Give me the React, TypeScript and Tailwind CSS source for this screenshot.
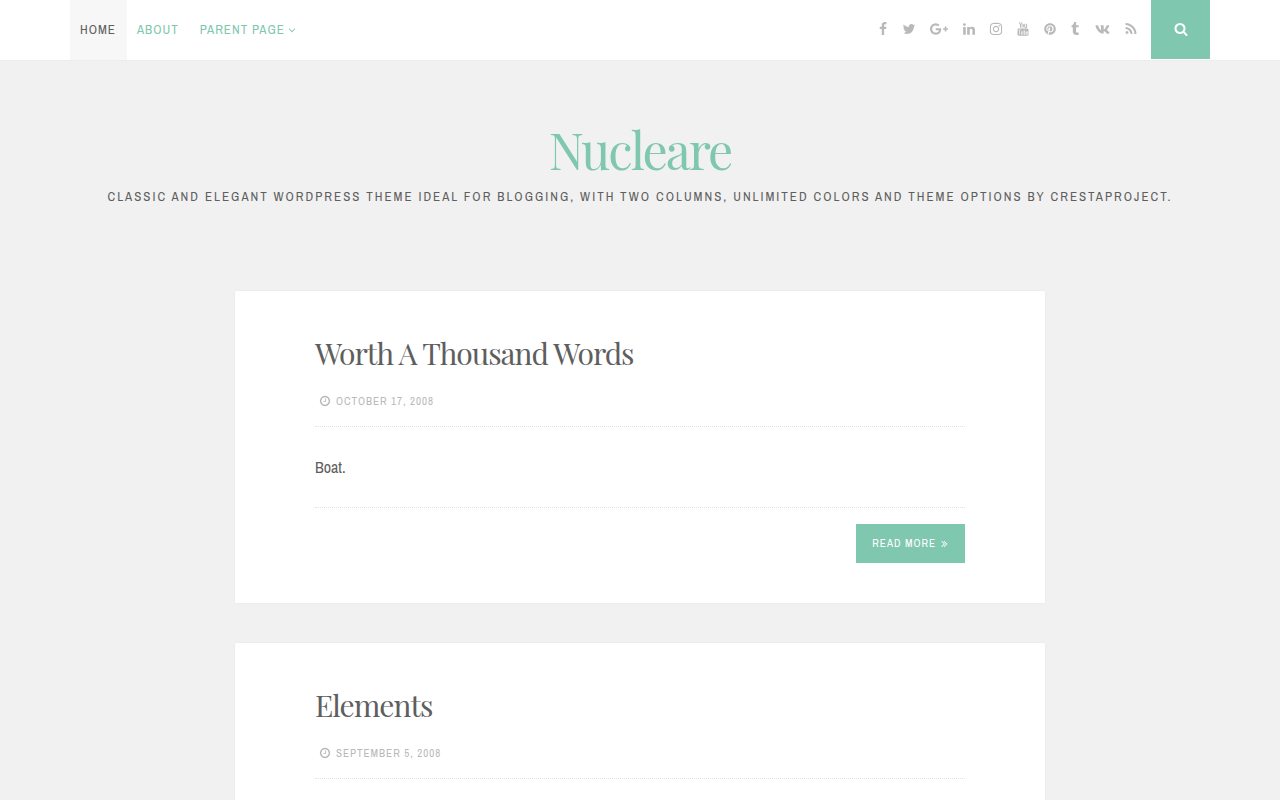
import type { ReactNode } from 'react'
import { FaInstagram, FaPinterest, FaVk } from 'react-icons/fa'

type GlyphProps = {
  d: string
  className: string
  viewBox?: string
}

function Glyph({ d, className, viewBox = '0 0 1792 1792' }: GlyphProps) {
  return (
    <svg viewBox={viewBox} fill="currentColor" aria-hidden="true" className={`shrink-0 ${className}`}>
      <path d={d} />
    </svg>
  )
}

const paths = {
  facebook:
    'M1343 12v264h-157q-86 0-116 36t-30 108v189h293l-39 296h-254v759h-306v-759h-255v-296h255v-218q0-186 104-288.500t277-102.500q147 0 228 12z',
  twitter:
    'M1684 408q-67 98-162 167 1 14 1 42 0 130-38 259.500t-115.500 248.500-184.500 210.500-258 146-323 54.500q-271 0-496-145 35 4 78 4 225 0 401-138-105-2-188-64.500t-114-159.500q33 5 61 5 43 0 85-11-112-23-185.500-111.500t-73.500-205.500v-4q68 38 146 41-66-44-105-115t-39-154q0-88 44-163 121 149 294.500 238.500t371.500 99.500q-8-38-8-74 0-134 94.500-228.500t228.500-94.500q140 0 236 102 109-21 205-78-37 115-142 178 93-10 186-50z',
  google:
    'M1437 913q0 208-87 370.500t-248 254-369 91.500q-149 0-285-58t-234-156-156-234-58-285 58-285 156-234 234-156 285-58q286 0 491 192l-199 191q-117-113-292-113-123 0-227.500 62t-165.500 168.500-61 232.500 61 232.500 165.500 168.500 227.500 62q83 0 152.500-23t114.500-57.500 78.500-78.500 49-83 21.500-74h-416v-252h692q12 63 12 122zm867-122v210h-209v209h-210v-209h-209v-210h209v-209h210v209h209z',
  linkedin:
    'M477 625v991h-330v-991h330zm21-306q1 73-50.500 122t-135.500 49h-2q-82 0-132-49t-50-122q0-74 51.500-122.500t134.500-48.500 133 48.500 51 122.500zm1166 729v568h-329v-530q0-105-40.500-164.500t-126.500-59.500q-63 0-105.500 34.500t-63.500 85.500q-11 30-11 81v553h-329q2-399 2-647t-1-296l-1-48h329v144h-2q20-32 41-56t56.500-52 87-43.500 114.500-15.500q171 0 275 113.500t104 332.500z',
  tumblr:
    'M1328 1329l80 237q-23 35-111 66t-177 32q-104 2-190.500-26t-142.500-74-95-106-55.500-120-16.500-118v-544h-168v-215q72-26 129-69.500t91-90 58-102 34-99 15-88.500q1-5 4.500-8.500t7.500-3.500h244v424h333v252h-334v518q0 30 6.500 56t22.500 52.500 49.500 41.500 81.500 14q78-2 134-29z',
  rss: 'M576 1344q0 80-56 136t-136 56-136-56-56-136 56-136 136-56 136 56 56 136zm512 123q2 28-17 48-18 21-47 21h-135q-25 0-43-16.500t-20-41.500q-22-229-184.500-391.500t-391.500-184.500q-25-2-41.500-20t-16.500-43v-135q0-29 21-47 17-17 43-17h5q160 13 306 80.500t259 181.500q114 113 181.500 259t80.500 306zm512 2q2 27-18 47-18 20-46 20h-143q-26 0-44.500-17.500t-19.500-42.500q-12-215-101-408.500t-231.500-336-336-231.500-408.500-102q-25-1-42.500-19.500t-17.500-43.500v-143q0-28 20-46 18-18 44-18h3q262 13 501.500 120t425.500 294q187 186 294 425.500t120 501.500z',
  search:
    'M1216 832q0-185-131.500-316.500t-316.500-131.500-316.500 131.500-131.500 316.500 131.500 316.500 316.500 131.500 316.500-131.500 131.500-316.500zm512 832q0 52-38 90t-90 38q-54 0-90-38l-343-342q-179 124-399 124-143 0-273.500-55.500t-225-150-150-225-55.500-273.500 55.500-273.500 150-225 225-150 273.500-55.500 273.500 55.500 225 150 150 225 55.500 273.500q0 220-124 399l343 343q37 37 37 90z',
  clock:
    'M1024 544v448q0 14-9 23t-23 9h-320q-14 0-23-9t-9-23v-64q0-14 9-23t23-9h224v-352q0-14 9-23t23-9h64q14 0 23 9t9 23zm416 352q0-148-73-273t-198-198-273-73-273 73-198 198-73 273 73 273 198 198 273 73 273-73 198-198 73-273zm224 0q0 209-103 385.500t-279.500 279.500-385.500 103-385.500-103-279.500-279.500-103-385.500 103-385.500 279.500-279.500 385.500-103 385.500 103 279.500 279.500 103 385.500z',
  angleDown:
    'M1395 736q0 13-10 23l-466 466q-10 10-23 10t-23-10l-466-466q-10-10-10-23t10-23l50-50q10-10 23-10t23 10l393 393 393-393q10-10 23-10t23 10l50 50q10 10 10 23z',
  angleDoubleRight:
    'M979 960q0 13-10 23l-466 466q-10 10-23 10t-23-10l-50-50q-10-10-10-23t10-23l393-393-393-393q-10-10-10-23t10-23l50-50q10-10 23-10t23 10l466 466q10 10 10 23zm384 0q0 13-10 23l-466 466q-10 10-23 10t-23-10l-50-50q-10-10-10-23t10-23l393-393-393-393q-10-10-10-23t10-23l50-50q10-10 23-10t23 10l466 466q10 10 10 23z',
}

function YoutubeLogo() {
  return (
    <svg viewBox="0 0 12 14" aria-hidden="true" className="h-[14px] w-3 shrink-0">
      <rect x="0.500" y="6.500" width="11" height="7.200" rx="1.400" fill="currentColor" />
      <path
        d="M2.300 .3 3.500 3V5.700M4.700 .3 3.500 3M7.700 1.800v3.500M9.600 1.800v3.700H7.900"
        fill="none"
        stroke="currentColor"
        strokeWidth="1"
      />
      <rect x="5" y="2.100" width="1.500" height="3.200" rx="0.700" fill="none" stroke="currentColor" strokeWidth="0.900" />
      <path
        d="M1.500 8h2M2.500 8v4.500M4.500 9.300v3h1.300V9.300M7.200 7.800v4.600h1V9.700h-1M10.600 11.500v.9H9.600V9.700h1V11h-1"
        fill="none"
        stroke="#fff"
        strokeWidth="0.600"
      />
    </svg>
  )
}

const socials: { name: string; width: string; icon: ReactNode }[] = [
  { name: 'Facebook', width: 'w-2', icon: <Glyph d={paths.facebook} className="size-[14px]" /> },
  { name: 'Twitter', width: 'w-[13px]', icon: <Glyph d={paths.twitter} className="size-[14px]" /> },
  {
    name: 'Google Plus',
    width: 'w-[18px]',
    icon: <Glyph d={paths.google} viewBox="0 0 2304 1792" className="h-[14px] w-[18px]" />,
  },
  { name: 'Linkedin', width: 'w-3', icon: <Glyph d={paths.linkedin} className="size-[14px]" /> },
  { name: 'Instagram', width: 'w-3', icon: <FaInstagram className="size-[14px] shrink-0" /> },
  { name: 'YouTube', width: 'w-3', icon: <YoutubeLogo /> },
  { name: 'Pinterest', width: 'w-3', icon: <FaPinterest className="size-3 shrink-0" /> },
  { name: 'Tumblr', width: 'w-2', icon: <Glyph d={paths.tumblr} className="size-[14px]" /> },
  { name: 'VK', width: 'w-4', icon: <FaVk className="size-[15px] shrink-0" /> },
  { name: 'RSS', width: 'w-[11px]', icon: <Glyph d={paths.rss} className="size-[14px]" /> },
]

type PostProps = {
  title: string
  date: string
  text?: string
}

const posts: PostProps[] = [
  { title: 'Worth A Thousand Words', date: 'October 17, 2008', text: 'Boat.' },
  { title: 'Elements', date: 'September 5, 2008' },
]

function Navbar() {
  return (
    <div className="border-b border-[#ececec] bg-white">
      <div className="mx-auto flex h-[60px] max-w-[1140px] items-start justify-between">
        <nav className="flex h-full text-[13px] tracking-[1px] uppercase text-[#7fc7af]">
          <a href="#" className="flex items-center bg-[#f7f7f7] pr-[11px] pl-[10px] text-[#5e5e5e]">
            Home
          </a>
          <a href="#" className="flex items-center pr-[11px] pl-[10px]">
            About
          </a>
          <a href="#" className="flex items-center gap-px pr-[11px] pl-[10px]">
            Parent Page
            <Glyph d={paths.angleDown} className="size-3" />
          </a>
        </nav>
        <div className="flex h-[59px] gap-[15px]">
          <div className="flex items-center gap-[15px] pb-px text-[#b9b9b9]">
            {socials.map((s) => (
              <a key={s.name} href="#" aria-label={s.name} className={`flex justify-center ${s.width}`}>
                {s.icon}
              </a>
            ))}
          </div>
          <button aria-label="Search" className="flex h-full w-[59px] items-center justify-center bg-[#7fc7af] pb-px text-white">
            <Glyph d={paths.search} className="size-[14px]" />
          </button>
        </div>
      </div>
    </div>
  )
}

function Post({ title, date, text }: PostProps) {
  return (
    <article className="mb-10 bg-white px-20 py-10 shadow-[0_0_2px_rgba(0,0,0,0.06)]">
      <h2 className="font-['Playfair_Display','Liberation_Serif',serif] text-[30px] leading-[44px] tracking-[-1px]">
        <a href="#">{title}</a>
      </h2>
      <div className="flex items-center gap-[5px] border-b border-dotted border-[#e2e2e2] pt-4 pb-[15px] pl-1 text-[11px] leading-5 tracking-[1px] uppercase text-[#b9b9b9]">
        <Glyph d={paths.clock} className="size-3" />
        <time>{date}</time>
      </div>
      {text && (
        <>
          <p className="border-b border-dotted border-[#e2e2e2] py-7 text-base leading-6">{text}</p>
          <div className="mt-4 flex justify-end">
            <a
              href="#"
              className="flex h-[39px] items-center gap-[3px] bg-[#7fc7af] pr-[15px] pl-4 text-[11px] tracking-[1px] uppercase text-white"
            >
              Read More
              <Glyph d={paths.angleDoubleRight} className="size-[11px]" />
            </a>
          </div>
        </>
      )}
    </article>
  )
}

export default function App() {
  return (
    <div className="min-h-screen bg-[#f1f1f1] font-['Archivo_Narrow','Liberation_Sans_Narrow','Liberation_Sans',sans-serif] text-[#5e5e5e]">
      <Navbar />
      <header className="px-4 pt-[59px] pb-[81px] text-center">
        <h1 className="font-['Playfair_Display','Liberation_Serif',serif] text-[50px] leading-[60px] tracking-[-2px] text-[#7fc7af]">
          <a href="#">Nucleare</a>
        </h1>
        <p className="mt-1 text-[13px] leading-[26px] tracking-[2px] uppercase">
          Classic and elegant WordPress theme ideal for blogging, with two columns, unlimited colors and theme options by
          CrestaProject.
        </p>
      </header>
      <main className="mx-auto max-w-[810px]">
        {posts.map((post) => (
          <Post key={post.title} {...post} />
        ))}
      </main>
    </div>
  )
}
